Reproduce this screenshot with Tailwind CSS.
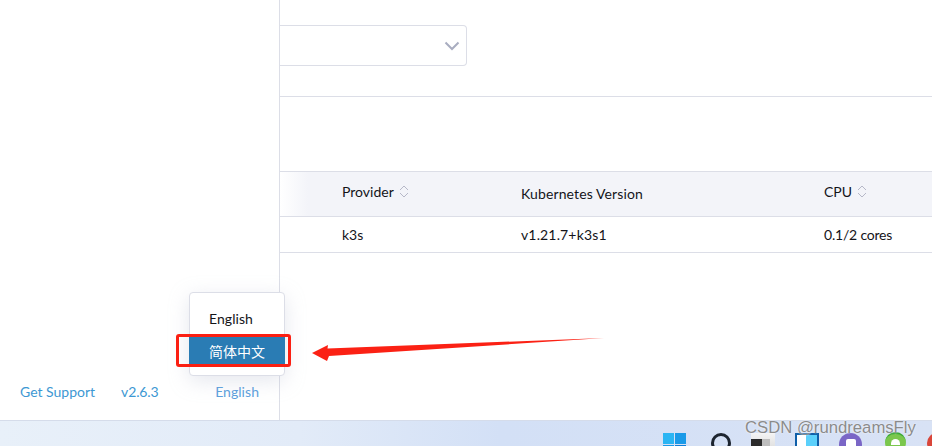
<!DOCTYPE html>
<html>
<head>
<meta charset="utf-8">
<script src="https://cdn.jsdelivr.net/npm/@tailwindcss/browser@4"></script>
</head>
<body class="m-0 bg-white">
<div class="relative w-[932px] h-[446px] overflow-hidden flex flex-col font-['Lato','Noto_Sans_CJK_SC',sans-serif] text-[14px] text-[#141419]">
  <div class="flex h-[420px]">
    <aside class="w-[280px] shrink-0 border-r border-[#dcdee7] flex flex-col justify-end">
      <div class="flex items-center justify-between pl-[20px] pr-[20px] pb-[19px] text-[14px] leading-[18px] text-[#3d98d3]">
        <span>Get Support</span>
        <span class="ml-[26px] tracking-[-0.15px]">v2.6.3</span>
        <span class="ml-auto text-[#5b9fdc] tracking-[0.05px]">English</span>
      </div>
    </aside>
    <main class="flex-1 min-w-0">
      <div class="mt-[25px] w-[187px] h-[41px] border border-l-0 border-[#dcdee7] rounded-r-[4px] flex items-center justify-end pr-[6px]">
        <svg width="16" height="10" viewBox="0 0 16 10" fill="none" stroke="#a9adc0" stroke-width="2"><path d="M1.5 1.5 8 8l6.500-6.500"/></svg>
      </div>
      <div class="mt-[30px] h-px bg-[#dcdee7]"></div>
      <div class="mt-[74px] h-[46px] bg-[linear-gradient(90deg,#ffffff_0,#f3f4f9_28px)] border-y border-[#dcdee7] grid grid-cols-[62px_179px_303px_1fr] items-center">
        <span></span>
        <span class="flex items-center gap-[5px] -mt-[5px]">Provider
          <svg width="10" height="13" viewBox="0 0 10 13" fill="none" stroke="#b6b8c8" stroke-width="1"><path d="M1 5l4-4 4 4M1 8l4 4 4-4"/></svg>
        </span>
        <span class="-mt-[1px] tracking-[0.12px]">Kubernetes Version</span>
        <span class="flex items-center gap-[5px] -mt-[5px]">CPU
          <svg width="10" height="13" viewBox="0 0 10 13" fill="none" stroke="#b6b8c8" stroke-width="1"><path d="M1 5l4-4 4 4M1 8l4 4 4-4"/></svg>
        </span>
      </div>
      <div class="h-[36px] border-b border-[#dcdee7] grid grid-cols-[62px_179px_303px_1fr] items-center">
        <span></span>
        <span>k3s</span>
        <span class="tracking-[0.15px]">v1.21.7+k3s1</span>
        <span class="tracking-[-0.2px]">0.1/2 cores</span>
      </div>
    </main>
  </div>
  <div class="relative h-[26px] border-t border-[#d5dcea] bg-[linear-gradient(90deg,#e8f0f9_0,#e2ebf8_300px,#d3e0f6_500px,#d8e2f5_932px)] overflow-hidden">
    <div class="absolute left-[663px] top-[12px] w-[23px] h-[23px] grid grid-cols-2 grid-rows-2 gap-px">
      <span class="bg-[#2bb5f3]"></span><span class="bg-[#1a9ae8]"></span><span class="bg-[#1a9ae8]"></span><span class="bg-[#0f7fd8]"></span>
    </div>
    <div class="absolute left-[711px] top-[12px] w-[20px] h-[20px] rounded-full border-[3px] border-[#1d2530]"></div>
    <div class="absolute left-[751px] top-[12px] w-[24px] h-[20px] bg-[linear-gradient(180deg,#f4f4f4_0,#d8d8d8_100%)]">
      <span class="absolute left-0 top-[6px] w-[11px] h-[14px] bg-[#2b2b2b]"></span>
      <span class="absolute left-[11px] top-[6px] w-[8px] h-[14px] bg-[#bdbdbd]"></span>
    </div>
    <div class="absolute left-[795px] top-[12px] w-[24px] h-[20px] border-[2px] border-[#0f5fa8] bg-[linear-gradient(90deg,#ffffff_45%,#5bd0fb_45%)]"></div>
    <div class="absolute left-[839px] top-[12px] w-[23px] h-[23px] rounded-full bg-[#7a66c6] flex justify-center pt-[6px]"><span class="block w-[10px] h-[12px] bg-white rounded-[2px]"></span></div>
    <div class="absolute left-[885px] top-[11px] w-[21px] h-[21px] rounded-full bg-[#7bc74d] border-t-[2px] border-[#39a935] flex justify-center pt-[5px]"><span class="block w-[9px] h-[6px] bg-white rounded-t-full"></span></div>
    <div class="absolute left-[927px] top-[12px] w-[20px] h-[20px] rounded-full bg-[#d9463a]"></div>
  </div>

  <!-- language menu -->
  <div class="absolute left-[189px] top-[292px] w-[96px] h-[84px] bg-white border border-[#dcdee7] rounded-[4px] shadow-[0_5px_20px_rgba(180,185,205,0.35)] pt-[15px]">
    <div class="h-[22px] pl-[19px] leading-[22px] text-[14px] text-[#141419] tracking-[0.05px]">English</div>
    <div class="mt-[7px] -ml-px h-[29px] w-[96px] pl-[20px] leading-[29px] text-[14px] bg-[#2a7cb4] text-white">简体中文</div>
  </div>

  <!-- annotation -->
  <div class="absolute left-[176px] top-[334px] w-[115px] h-[33px] border-[3px] border-[#fb1f12] rounded-[3px]"></div>
  <svg class="absolute left-[300px] top-[330px]" width="310" height="35" viewBox="0 0 310 35"><path d="M12 23 28 15 27.500 18.500 304 8 29 26 27 31Z" fill="#fb2114"/></svg>
  <div class="absolute left-[745px] top-[417px] text-[16.700px] leading-[22px] font-['Liberation_Sans',sans-serif] text-[#8b8b8b] [text-shadow:0_0_2px_#ffffff]">CSDN @rundreamsFly</div>
</div>
</body>
</html>
